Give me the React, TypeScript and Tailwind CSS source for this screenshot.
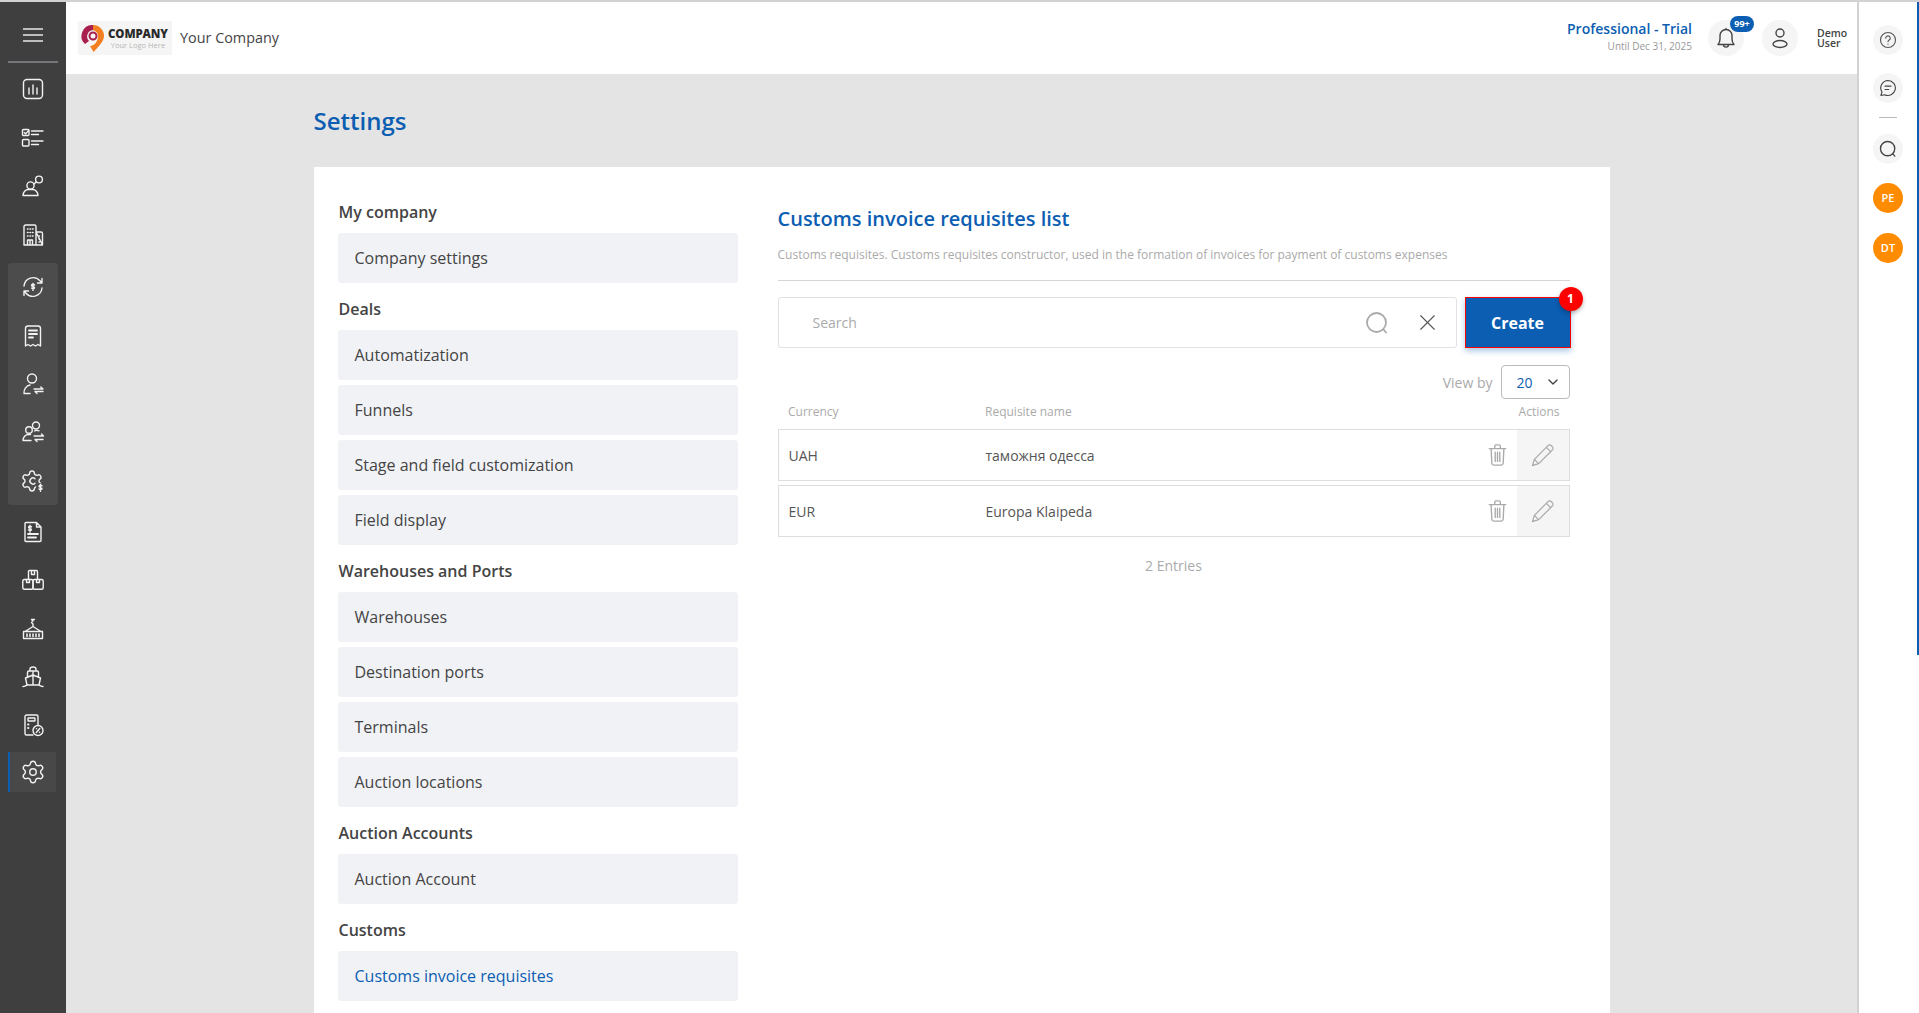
import type { ReactNode } from "react";
import { Settings, X, ChevronDown } from "lucide-react";

const menu = [
  { title: "My company", items: ["Company settings"] },
  {
    title: "Deals",
    items: ["Automatization", "Funnels", "Stage and field customization", "Field display"],
  },
  {
    title: "Warehouses and Ports",
    items: ["Warehouses", "Destination ports", "Terminals", "Auction locations"],
  },
  { title: "Auction Accounts", items: ["Auction Account"] },
  { title: "Customs", items: ["Customs invoice requisites"] },
];

const rows = [
  { currency: "UAH", name: "таможня одесса" },
  { currency: "EUR", name: "Europa Klaipeda" },
];

const gearPath =
  "M9.671 4.136a2.34 2.34 0 0 1 4.659 0 2.34 2.34 0 0 0 3.319 1.915 2.34 2.34 0 0 1 2.33 4.033 2.34 2.34 0 0 0 0 3.831 2.34 2.34 0 0 1-2.33 4.033 2.34 2.34 0 0 0-3.319 1.915 2.34 2.34 0 0 1-4.659 0 2.34 2.34 0 0 0-3.32-1.915 2.34 2.34 0 0 1-2.33-4.033 2.34 2.34 0 0 0 0-3.831A2.34 2.34 0 0 1 6.35 6.051a2.34 2.34 0 0 0 3.319-1.915";

const dollar = (x: number, y: number) => (
  <path d={`M${x + 1.5} ${y - 1.6}c-.4-.6-.9-.8-1.5-.8-.9 0-1.5.4-1.5 1.1 0 1.6 3 .8 3 2.4 0 .7-.6 1.1-1.5 1.1-.6 0-1.2-.3-1.5-.8M${x} ${y - 3.2}v7`} />
);

function Ico({ children }: { children: ReactNode }) {
  return (
    <svg viewBox="0 0 24 24" className="h-[24px] w-[24px]" fill="none" stroke="#f2f2f2" strokeWidth="1.4" strokeLinecap="round" strokeLinejoin="round">
      {children}
    </svg>
  );
}

const railIcons: ReactNode[] = [
  <Ico>
    <rect x="2.5" y="2.5" width="19" height="19" rx="3.5" />
    <path d="M8 11v6M12 8v9M16 11v6" />
  </Ico>,
  <Ico>
    <rect x="1.5" y="3.5" width="6.5" height="6" rx="1" />
    <path d="M3.3 6.5l1.4 1.4 3-3.4M10.500 5h11.500M10.500 8.500h7" />
    <rect x="1.500" y="13.500" width="6.500" height="6.500" rx="1" />
    <path d="M10.500 15h11.500M10.500 18.500h7" />
  </Ico>,
  <Ico>
    <circle cx="9.5" cy="11.5" r="3.6" />
    <path d="M2 21.500c0-3.500 2.500-6 5.500-6h4c3 0 5.500 2.500 5.500 6z" />
    <circle cx="18" cy="5.500" r="3.400" />
    <path d="M13 10l2.200-2" />
  </Ico>,
  <Ico>
    <path d="M3 22V3.500C3 2.700 3.700 2 4.500 2h9c.8 0 1.500.7 1.500 1.500V22M15 9h5c.8 0 1.500.7 1.500 1.500V22zM3 22h18.500M6.500 22v-5h5v5M9 17v5" />
    <path d="M6.500 6h.5M9 6h.5M11.500 6h.5M6.500 9.500h.5M9 9.500h.5M11.500 9.500h.5M6.500 13h.5M9 13h.5M11.500 13h.5M18 13h.5M18 16h.5M18 19h.5" strokeWidth="1.600" />
  </Ico>,
  <Ico>
    <path d="M3 11a9.200 9.200 0 0 1 16-5.200L21 8M21 3.500V8h-4.500M21 13a9.200 9.200 0 0 1-16 5.200L3 16M3 20.500V16h4.500" />
    {dollar(12, 11.6)}
  </Ico>,
  <Ico>
    <path d="M4.500 22V4.500C4.500 3.100 5.600 2 7 2h10c1.400 0 2.500 1.100 2.500 2.500V22l-2.500-1.500-2.500 1.500-2.500-1.500L9.500 22 7 20.500z" />
    <path d="M8 6.500h8M8 10h8M8 13.500h4" strokeWidth="1.800" />
  </Ico>,
  <Ico>
    <circle cx="11" cy="6.500" r="4.500" />
    <path d="M3 21.500c-.5-4 2.500-8 6-8.500M3 21.500h6M13 17h9l-2.200-2M22 19.500h-8l2 2" />
  </Ico>,
  <Ico>
    <circle cx="15" cy="5.500" r="3.500" />
    <circle cx="8" cy="10" r="3.300" />
    <path d="M2 20.500c0-3.500 2.500-6 5.500-6h2M2 20.500h8M13.500 11c1-.6 3-.8 4.500-.2M13 16h9.500l-2-2M22 19.500h-8l2 2" />
  </Ico>,
  <Ico>
    <path d={gearPath} transform="translate(-1 0)" />
    <circle cx="19.500" cy="18.500" r="4.500" fill="#4c4c4c" stroke="none" />
    <path d="M14 9.800a3 3 0 1 0 0 4.400" />
    {dollar(19.5, 18.5)}
  </Ico>,
  <Ico>
    <path d="M5 2.500h10.500L20 7v13.500c0 .6-.4 1-1 1H5c-.6 0-1-.4-1-1v-17c0-.6.4-1 1-1zM15.500 2.500V7H20" />
    {dollar(9, 8.5)}
    <path d="M7 14h10M7 17.500h8" strokeWidth="1.800" />
  </Ico>,
  <Ico>
    <path d="M7.500 11.500V3.500c0-.6.4-1 1-1h7c.6 0 1 .4 1 1v8M10.500 2.500v4h3v-4" />
    <rect x="1.800" y="11.500" width="10.200" height="9.800" rx="1.500" />
    <rect x="12" y="11.500" width="10.200" height="9.800" rx="1.500" />
    <path d="M5.500 11.500v3h3v-3M15.500 11.500v3h3v-3" />
  </Ico>,
  <Ico>
    <path d="M2.500 14.500h19v7h-19zM4 14.500l8-5 8 5M12 9.500V7l-1.500-1.500L12 4 10.500 2.500h3" />
    <path d="M6 17v2.500M9 17v2.500M12 17v2.500M15 17v2.500M18 17v2.500" strokeWidth="1.600" />
  </Ico>,
  <Ico>
    <path d="M9 6V4c0-1.200 1.300-2 3-2s3 .8 3 2v2M6.500 11.500V7.500C6.500 6.700 7.200 6 8 6h8c.8 0 1.500.7 1.500 1.500v4M12 6v14M4.500 13l7.500-3 7.500 3-1.500 7H6zM2 21.500c1.500 0 2.500-.8 4-1.500M22 21.500c-1.500 0-2.500-.8-4-1.500" />
  </Ico>,
  <Ico>
    <path d="M12 22H5.500C4.700 22 4 21.300 4 20.500v-17C4 2.700 4.700 2 5.500 2h10c.8 0 1.500.7 1.500 1.500v8" />
    <rect x="7" y="5" width="7" height="3" rx=".5" />
    <path d="M7 11.500h.5M7 15h.5" strokeWidth="1.800" />
    <circle cx="17" cy="17.500" r="5" />
    <path d="M15.300 19.500l3.500-4M15.500 15.800h.1M18.500 19.300h.1" />
  </Ico>,
];

function NavSection({ title, items }: { title: string; items: string[] }) {
  return (
    <div className="mb-[14px]">
      <h3 className="mb-[9px] pl-px text-[16px] leading-[24px] font-semibold text-[#444]">{title}</h3>
      <div className="flex flex-col gap-[5px]">
        {items.map((item) => (
          <div
            key={item}
            className={`flex h-[50px] items-center rounded-[3px] bg-[#f1f2f6] pl-[17px] text-[16px] ${
              item === "Customs invoice requisites" ? "text-[#0c5eb2]" : "text-[#444]"
            }`}
          >
            {item}
          </div>
        ))}
      </div>
    </div>
  );
}

function RoundBtn({ children }: { children: ReactNode }) {
  return (
    <div className="flex h-[30px] w-[30px] items-center justify-center rounded-full bg-[#f5f5f5]">
      {children}
    </div>
  );
}

function SearchIcon({ className, color }: { className: string; color: string }) {
  return (
    <svg viewBox="0 0 24 24" className={className} fill="none" stroke={color} strokeWidth="1.8" strokeLinecap="round">
      <circle cx="11.5" cy="11.5" r="9.5" />
      <path d="M18.500 18.500l2.500 3" />
    </svg>
  );
}

function TrashIcon() {
  return (
    <svg viewBox="0 0 20 24" className="h-[22px] w-[19px]" fill="none" stroke="#aaa" strokeWidth="1.5" strokeLinecap="round" strokeLinejoin="round">
      <path d="M1 5h18M7 5V2.500C7 1.700 7.700 1 8.500 1h3c.8 0 1.500.7 1.500 1.500V5M3 5l.8 16c.1 1.200.9 2 2 2h8.400c1.100 0 1.900-.8 2-2L17 5M7.500 9v10M10 9v10M12.500 9v10" />
    </svg>
  );
}

function PencilIcon() {
  return (
    <svg viewBox="0 0 24 24" className="h-[23px] w-[23px]" fill="none" stroke="#aaa" strokeWidth="1.3" strokeLinecap="round" strokeLinejoin="round">
      <path d="M1.500 22.500l2-6.500L17.500 2c1.200-1.200 2.800-1.200 3.800-.2l.9.9c1 1 1 2.600-.2 3.800L8 20.500zM3.500 16l4.500 4.500M16 3.500l4.500 4.500" />
    </svg>
  );
}

export default function App() {
  return (
    <div className="relative flex h-[1013px] w-full overflow-hidden border-t-2 border-[#d2d2d2] bg-white font-['Open_Sans',sans-serif]">
      {/* left rail */}
      <aside className="flex w-[66px] shrink-0 flex-col bg-[#3f3f3f] px-2">
        <div className="flex h-[61px] items-center justify-center border-b-2 border-[#75767a] pt-[7px]">
          <svg viewBox="0 0 20 14" className="h-[14px] w-[20px]" fill="none" stroke="#e8e8e8" strokeWidth="1.5">
            <path d="M0 1h20M0 7h20M0 13h20" />
          </svg>
        </div>
        <div className="mt-[2px] flex flex-col">
          {railIcons.slice(0, 4).map((icon, i) => (
            <div key={i} className="flex h-[48.5px] items-center justify-center">
              {icon}
            </div>
          ))}
        </div>
        <div className="mt-[4px] flex h-[242px] flex-col rounded-[3px] bg-[#4c4c4c]">
          {railIcons.slice(4, 9).map((icon, i) => (
            <div key={i} className="flex h-[48.4px] items-center justify-center">
              {icon}
            </div>
          ))}
        </div>
        <div className="mt-[3px] flex flex-col">
          {railIcons.slice(9).map((icon, i) => (
            <div key={i} className="flex h-[48.3px] items-center justify-center">
              {icon}
            </div>
          ))}
        </div>
        <div className="mt-[3px] flex h-[40px] w-[48px] items-center justify-center border-l-2 border-[#0c5eb2] bg-[#484848]">
          <Settings size={26} color="#f2f2f2" strokeWidth={1.3} />
        </div>
      </aside>

      <div className="flex min-w-0 flex-1 flex-col">
        {/* header */}
        <header className="flex h-[72px] shrink-0 items-center bg-white pl-[12px] pr-[10px]">
          <div className="flex h-[34px] w-[94px] items-center bg-[#f5f5f5] pl-[3px]">
            <svg viewBox="0 0 24 27" className="h-[27px] w-[24px] shrink-0">
              <path d="M12 0a11 11 0 0 1 11 11c0 5-5 10-9.500 15l-1 1L9 21c5-.5 8-5 8-10 0-3-2-5-5-6z" fill="#f37f20" />
              <path d="M12 0A11 11 0 0 0 4 19l4-3a6.500 6.500 0 0 1 4-11z" fill="#a81e4e" />
              <circle cx="12" cy="11" r="3.500" fill="none" stroke="#a81e4e" strokeWidth="2" />
            </svg>
            <div className="ml-[3px] flex flex-col items-center">
              <span className="text-[11.5px] leading-[13px] font-extrabold tracking-[-0.1px] text-[#2b2b2b]">COMPANY</span>
              <span className="text-[7.5px] leading-[10px] text-[#b5b5b5]">Your Logo Here</span>
            </div>
          </div>
          <span className="ml-2 pb-[1px] text-[14.4px] text-[#444]">Your Company</span>

          <div className="ml-auto flex flex-col items-end pb-[5px]">
            <span className="text-[14px] leading-[19px] font-semibold text-[#0c5eb2]">Professional - Trial</span>
            <span className="mt-[2px] text-[10px] leading-[12px] text-[#999]">Until Dec 31, 2025</span>
          </div>
          <div className="relative ml-4 flex h-[36px] w-[36px] items-center justify-center rounded-full bg-[#f5f5f5]">
            <svg viewBox="0 0 24 24" className="h-[24px] w-[24px]" fill="none" stroke="#444" strokeWidth="1.4" strokeLinecap="round" strokeLinejoin="round">
              <path d="M4 18.500c1.500-1.500 2-3 2-5.500V9.500a6 6 0 0 1 12 0V13c0 2.500.5 4 2 5.500zM9.500 18.500c0 3.500 5 3.500 5 0M12 3.500V2.500" />
            </svg>
            <span className="absolute top-[-4px] left-[22px] flex h-[16px] w-[24px] items-center justify-center rounded-full bg-[#0c5eb2] text-[9px] font-bold text-white">
              99+
            </span>
          </div>
          <div className="ml-[18px] flex h-[36px] w-[36px] items-center justify-center rounded-full bg-[#f5f5f5]">
            <svg viewBox="0 0 24 24" className="h-[24px] w-[24px]" fill="none" stroke="#444" strokeWidth="1.4">
              <circle cx="12" cy="7" r="4" />
              <ellipse cx="12" cy="18" rx="7" ry="3.5" />
            </svg>
          </div>
          <div className="ml-[19px] flex w-[30px] flex-col text-[10.5px] leading-[10px] font-semibold text-[#444]">
            <span>Demo</span>
            <span>User</span>
          </div>
        </header>

        {/* content */}
        <main className="min-h-0 flex-1 bg-[#e4e4e4]">
          <div className="mx-auto w-[1296px]">
            <h1 className="flex h-[93px] items-center text-[24px] font-semibold text-[#0c5eb2]">Settings</h1>
            <div className="flex bg-white pt-[33px] pl-[24px] pr-[40px]">
              <nav className="w-[400px] shrink-0">
                {menu.map((section) => (
                  <NavSection key={section.title} title={section.title} items={section.items} />
                ))}
              </nav>
              <section className="ml-[40px] min-w-0 flex-1 pt-[5px]">
                <h2 className="text-[20px] leading-[28px] font-semibold text-[#0c5eb2]">Customs invoice requisites list</h2>
                <p className="mt-[13px] text-[12px] leading-[18px] text-[#aaa]">
                  Customs requisites. Customs requisites constructor, used in the formation of invoices for payment of customs expenses
                </p>
                <div className="mt-[16px] h-px bg-[#d5d5d5]" />
                <div className="mt-[16px] -mr-px flex gap-2">
                  <div className="flex h-[51px] flex-1 items-center rounded-[3px] border border-[#e2e2e6] pl-[34px] pr-[15px]">
                    <span className="text-[14px] text-[#aaa]">Search</span>
                    <SearchIcon className="ml-auto h-[24px] w-[24px]" color="#aaa" />
                    <X size={27} color="#555" strokeWidth={1} className="ml-[25px]" />
                  </div>
                  <div className="relative flex h-[51px] w-[106px] items-center justify-center border border-[#ff0000] bg-[#0c5eb2] shadow-[0_3px_6px_rgba(12,94,178,0.35)]">
                    <span className="text-[16px] font-bold text-white">Create</span>
                    <span className="absolute top-[-11px] right-[-13px] flex h-[24px] w-[24px] items-center justify-center rounded-full bg-[#ff0000] text-[12px] font-bold text-white shadow-[0_2px_4px_rgba(0,0,0,0.3)]">
                      1
                    </span>
                  </div>
                </div>
                <div className="mt-[17px] flex items-center justify-end">
                  <span className="text-[14px] text-[#aaa]">View by</span>
                  <div className="ml-[8px] flex h-[34px] w-[69px] items-center rounded-[4px] border border-[#bbb] pl-[15px]">
                    <span className="text-[14px] text-[#0c5eb2]">20</span>
                    <ChevronDown size={16} color="#444" strokeWidth={2} className="ml-[12px]" />
                  </div>
                </div>
                <div className="mt-[4px] flex h-[17px] items-center pl-[10.5px] text-[12px] text-[#aaa]">
                  <span className="w-[197px]">Currency</span>
                  <span>Requisite name</span>
                  <span className="ml-auto mr-[10px]">Actions</span>
                </div>
                <div className="mt-[9px] flex flex-col gap-[4px]">
                  {rows.map((row) => (
                    <div key={row.currency} className="flex h-[52px] items-center border border-[#dedede] pl-[10px] text-[14px] text-[#555]">
                      <span className="w-[197px]">{row.currency}</span>
                      <span>{row.name}</span>
                      <div className="ml-auto mr-[10px]">
                        <TrashIcon />
                      </div>
                      <div className="flex h-full w-[52px] items-center justify-center bg-[#f5f5f5]">
                        <PencilIcon />
                      </div>
                    </div>
                  ))}
                </div>
                <p className="mt-[18px] text-center text-[14px] text-[#aaa]">2 Entries</p>
              </section>
            </div>
          </div>
        </main>
      </div>

      {/* right rail */}
      <aside className="flex w-[62px] shrink-0 flex-col items-center border-l-2 border-[#d2d2d2] bg-white pt-[23px] pr-[2px]">
        <RoundBtn>
          <svg viewBox="0 0 24 24" className="h-[18px] w-[18px]" fill="none" stroke="#555" strokeWidth="1.5" strokeLinecap="round">
            <circle cx="12" cy="12" r="10" />
            <path d="M9 9.500a3 3 0 1 1 4.500 2.600c-1 .6-1.500 1.200-1.500 2.200M12 17.500h.01" />
          </svg>
        </RoundBtn>
        <div className="mt-[18px]">
          <RoundBtn>
            <svg viewBox="0 0 24 24" className="h-[18px] w-[18px]" fill="none" stroke="#444" strokeWidth="1.5" strokeLinecap="round" strokeLinejoin="round">
              <path d="M12 2a10 10 0 1 1-4.500 19L2.500 22l1.500-4.500A10 10 0 0 1 12 2zM8 9.500h8M8 14h5" />
            </svg>
          </RoundBtn>
        </div>
        <div className="mt-[14px] h-px w-[18px] bg-[#bbb]" />
        <div className="mt-[16px]">
          <RoundBtn>
            <SearchIcon className="h-[18px] w-[18px]" color="#444" />
          </RoundBtn>
        </div>
        <div className="mt-[19px] flex h-[30px] w-[30px] items-center justify-center rounded-full bg-[#ff8c00] text-[11px] font-semibold text-white">PE</div>
        <div className="mt-[20px] flex h-[30px] w-[30px] items-center justify-center rounded-full bg-[#ff8c00] text-[11px] font-semibold text-white">DT</div>
      </aside>

      {/* page scrollbar */}
      <div className="absolute top-0 right-0 h-[653px] w-[2px] bg-[#0c5eb2]" />
    </div>
  );
}
